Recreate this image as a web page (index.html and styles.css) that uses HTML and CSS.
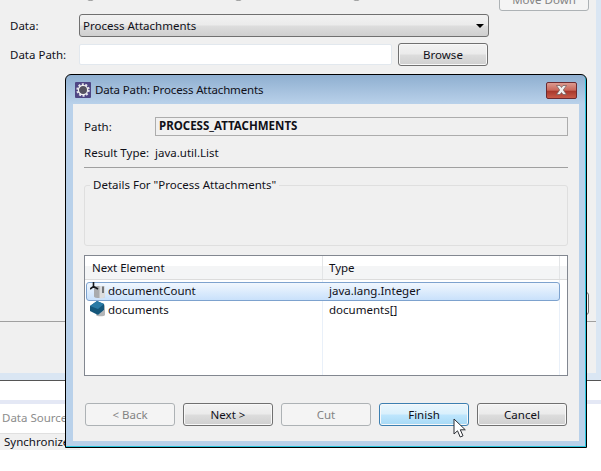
FILE: index.html
```html
<!DOCTYPE html>
<html lang="en">
<head>
  <meta charset="UTF-8" />
  <meta name="viewport" content="width=device-width, initial-scale=1.0" />
  <title>Data Path: Process Attachments</title>
  <link rel="stylesheet" href="styles.css">
</head>
<body>
  <div class="editor">
    <div class="top-row">
      <label class="radio radio-a"><span class="radio-dot"></span>Process Input</label>
      <label class="radio radio-b"><span class="radio-dot"></span>Output</label>
      <label class="radio radio-c"><span class="radio-dot"></span>By Output</label>
      <button class="btn move-down" disabled>Move Down</button>
    </div>
    <div class="field-row data-row">
      <span class="field-label">Data:</span>
      <div class="select">
        <span>Process Attachments</span>
        <span class="select-arrow"></span>
      </div>
    </div>
    <div class="field-row path-row">
      <span class="field-label">Data Path:</span>
      <div class="text-input"></div>
      <button class="btn browse">Browse</button>
    </div>
    <div class="hidden-actions">
      <button class="btn">Edit</button>
    </div>
    <div class="editor-rule"></div>
  </div>
  <div class="dock-line"></div>
  <div class="dock-gap"></div>
  <div class="view-title">Data Source</div>
  <div class="view-tab">Synchronize</div>

  <div class="dialog">
    <div class="title-bar">
      <svg class="title-icon" width="16" height="16" viewBox="0 0 16 16">
        <rect width="16" height="16" rx="1" fill="#4f4684"/>
        <circle cx="8" cy="8" r="5.6" fill="none" stroke="#e4e4e8" stroke-width="2.2" stroke-dasharray="2 1.5"/>
        <circle cx="8" cy="8" r="4.6" fill="#55525f" stroke="#f2f2f4" stroke-width="1.2"/>
      </svg>
      <span class="title-text">Data Path: Process Attachments</span>
      <div class="close-btn">
        <svg width="15" height="10" viewBox="0 0 15 10">
          <path d="M2.500 .5h3.500l1.500 2 1.500-2h3.500l-3.200 4.500 3.200 4.500H9l-1.500-2-1.500 2H2.500l3.200-4.500z" fill="#f2f2f2" stroke="#6b5a5a" stroke-width="0.7"/>
        </svg>
      </div>
    </div>
    <div class="dialog-body">
      <div class="info-row path-info">
        <span class="info-label">Path:</span>
        <div class="path-field">PROCESS_ATTACHMENTS</div>
      </div>
      <div class="info-row result-info">
        <span class="info-label">Result Type:</span>
        <span>java.util.List</span>
      </div>
      <div class="separator"></div>
      <fieldset class="details">
        <legend>Details For "Process Attachments"</legend>
      </fieldset>
      <div class="list">
        <div class="list-head">
          <div class="head-cell">Next Element</div>
          <div class="head-cell type-head">Type</div>
        </div>
        <div class="list-body">
          <div class="list-row selected">
            <div class="name-cell">
              <svg width="16" height="17" viewBox="0 0 16 17">
                <path d="M4 5c0-1.500 11-1.500 11 0v9.500c0 2-11 2-11 0z" fill="#a9abad"/>
                <path d="M9.500 4v12.500c3 0 5.500-.8 5.500-2V5c0-.6-2.500-1-5.500-1z" fill="#dcddde"/>
                <path d="M0 7l3.500-2.500L8 7M3.500 0v6" fill="none" stroke="#15181c" stroke-width="1.600"/>
                <path d="M13 4.500v6.500" stroke="#2c2f33" stroke-width="1.200"/>
              </svg>
              <span>documentCount</span>
            </div>
            <div class="type-cell">java.lang.Integer</div>
          </div>
          <div class="list-row">
            <div class="name-cell">
              <svg width="16" height="17" viewBox="0 0 16 17">
                <path d="M6 13v1c0 1.800 9 1.800 9 0V5l-1-2v6l-6 5z" fill="#b4b6b8"/>
                <path d="M0 5l7-5 7 3v6l-6 5-8-4z" fill="#14567a"/>
                <path d="M0 5l8 3 6-5-7-3z" fill="#2a7aa5"/>
              </svg>
              <span>documents</span>
            </div>
            <div class="type-cell">documents[]</div>
          </div>
        </div>
      </div>
      <div class="button-row">
        <button class="btn" disabled>&lt; Back</button>
        <button class="btn">Next &gt;</button>
        <button class="btn" disabled>Cut</button>
        <button class="btn hot">Finish</button>
        <button class="btn">Cancel</button>
      </div>
    </div>
  </div>

  <svg class="mouse-pointer" width="16" height="22" viewBox="0 0 16 22">
    <path d="M1 1v15l3.500-3.200 2.700 6.200 2.800-1.200-2.700-6h5z" fill="#fff" stroke="#2a2d33" stroke-width="1"/>
  </svg>
</body>
</html>
```
FILE: styles.css
```css
* {
  box-sizing: border-box;
}

html, body {
  margin: 0;
  height: 471px;
  overflow: hidden;
  background: #fff;
  color: #101018;
  font-family: "Noto Sans", sans-serif;
  font-size: 11.5px;
}

/* Buttons, Aero style */
.btn {
  width: 90px;
  height: 23px;
  padding: 0 0 1px;
  border: 1px solid #707070;
  border-radius: 3px;
  background: linear-gradient(#f2f2f2 0, #ebebeb 48%, #dddddd 52%, #cfcfcf 100%);
  box-shadow: inset 0 0 0 1px #f8f8f8;
  color: #101018;
  font: inherit;
}

.btn:disabled {
  border-color: #adb2b5;
  background: #f4f4f4;
  box-shadow: none;
  color: #838383;
}

.btn.hot {
  border-color: #3c7fb1;
  background: linear-gradient(#eaf6fd 0, #d9f0fc 48%, #bee6fd 52%, #a7d9f5 100%);
}

/* Editor behind the dialog */
.editor {
  display: flex;
  flex-direction: column;
  height: 380px;
  background: #f0f0f0;
  border-right: 5px solid #dae6f3;
  border-bottom: 7px solid #dae6f3;
}

.top-row {
  display: flex;
  justify-content: flex-end;
  height: 23px;
  margin: -12px 7px 0 0;
  position: relative;
}

.radio {
  display: flex;
  position: absolute;
  top: -3px;
  gap: 3px;
  line-height: 16px;
}

.radio-a { left: 84px; }
.radio-b { left: 232px; }
.radio-c { left: 350px; }

.radio-dot {
  width: 13px;
  height: 13px;
  margin-top: 3px;
  border: 1px solid #8e8f8f;
  border-radius: 50%;
  background: #f4f4f4;
}

.field-row {
  display: flex;
  align-items: center;
  padding-left: 10px;
}

.field-label {
  width: 69px;
}

.data-row {
  margin-top: 3px;
}

.select {
  display: flex;
  align-items: center;
  justify-content: space-between;
  width: 410px;
  height: 23px;
  padding: 0 4px 1px 3px;
  border: 1px solid #707070;
  border-radius: 3px;
  background: linear-gradient(#f2f2f2 0, #ebebeb 48%, #dddddd 52%, #cfcfcf 100%);
}

.select-arrow {
  width: 0;
  height: 0;
  margin-top: 2px;
  border-left: 4px solid transparent;
  border-right: 4px solid transparent;
  border-top: 4px solid #000;
}

.path-row {
  margin-top: 6px;
}

.text-input {
  width: 313px;
  height: 21px;
  border: 1px solid #e2e8ee;
  border-radius: 2px;
  background: #fff;
}

.browse {
  margin-left: 6px;
}

.hidden-actions {
  display: flex;
  justify-content: flex-end;
  margin: 226px 7px 0 0;
}

.editor-rule {
  height: 1px;
  margin-top: 6px;
  background: #a0a0a0;
}

.dock-line {
  height: 1px;
  background: #555;
}

.dock-gap {
  height: 23px;
  border-bottom: 4px solid #e4e8f5;
}

.view-title {
  height: 29px;
  padding-left: 2px;
  line-height: 27px;
  color: #8c8c8c;
}

.view-tab {
  width: 80px;
  height: 17px;
  padding-left: 4px;
  background: #f0f0f0;
  border-top: 1px solid #e0e0e0;
  line-height: 15px;
}

/* Dialog window */
.dialog {
  position: absolute;
  left: 65px;
  top: 74px;
  width: 522px;
  height: 374px;
  padding: 0 7px 6px 7px;
  border: 1px solid #000;
  border-radius: 6px 6px 0 0;
  background: linear-gradient(#8fafd0 0, #b9d1ea 29px);
  box-shadow: inset -1px -1px 0 #28c4dc;
  display: flex;
  flex-direction: column;
}

.title-bar {
  display: flex;
  align-items: center;
  height: 29px;
  flex-shrink: 0;
  margin-left: 2px;
  margin-right: 2px;
}

.title-text {
  margin-left: 4px;
  letter-spacing: -0.13px;
}

.close-btn {
  display: flex;
  align-items: center;
  justify-content: center;
  width: 31px;
  height: 17px;
  margin-left: auto;
  margin-top: 1px;
  border: 1px solid #6b2a30;
  border-radius: 2px;
  background: linear-gradient(#dc9a90 0, #c9675a 48%, #a8382c 55%, #c85a48 100%);
}

.dialog-body {
  flex: 1;
  padding: 13px 11px 0;
  background: #f0f0f0;
}

.info-row {
  display: flex;
  align-items: center;
}

.info-label {
  width: 71px;
}

.path-field {
  flex: 1;
  height: 19px;
  padding-left: 3px;
  border: 1px solid #acacac;
  font-weight: 700;
  line-height: 16px;
}

.result-info {
  height: 16px;
  margin-top: 8px;
}

.separator {
  height: 1px;
  margin-top: 7px;
  background: #a0a0a0;
}

.details {
  height: 69px;
  margin: 9px 0 0;
  padding: 0;
  border: 1px solid #dfdfdf;
  border-radius: 3px;
}

.details legend {
  margin-left: 5px;
  padding: 0 3px;
  line-height: 16px;
}

.list {
  height: 121px;
  margin-top: 9px;
  border: 1px solid #828790;
  background: #fff;
}

.list-head {
  display: grid;
  grid-template-columns: 238px 237px 1fr;
  height: 24px;
  border-bottom: 1px solid #dcdcdc;
  background: linear-gradient(#fff 0, #fff 42%, #f4f5f6 42%, #f4f5f6 100%);
}

.head-cell {
  padding-left: 7px;
  line-height: 23px;
  border-right: 1px solid #e3e5e7;
}

.type-head {
  padding-left: 6px;
}

.list-body {
  height: 95px;
  padding-top: 2px;
  background:
    linear-gradient(#e9f0f9, #e9f0f9) no-repeat 237px 0 / 1px 100%,
    linear-gradient(#e9f0f9, #e9f0f9) no-repeat 474px 0 / 1px 100%;
}

.list-row {
  display: grid;
  grid-template-columns: 236px 1fr;
  width: 474px;
  height: 19px;
  margin-left: 1px;
  line-height: 15px;
  border: 1px solid transparent;
}

.list-row.selected {
  border-color: #7da2ce;
  border-radius: 3px;
  background: linear-gradient(#f1f7fe, #c9e1fb);
}

.name-cell {
  display: flex;
  align-items: flex-start;
  gap: 2px;
  padding-left: 3px;
}

.name-cell svg {
  margin-top: -1px;
  flex-shrink: 0;
}

.type-cell {
  padding-left: 6px;
}

.button-row {
  display: flex;
  gap: 8px;
  margin: 27px 0 0 1px;
}

.mouse-pointer {
  position: absolute;
  left: 453px;
  top: 418px;
}
```
